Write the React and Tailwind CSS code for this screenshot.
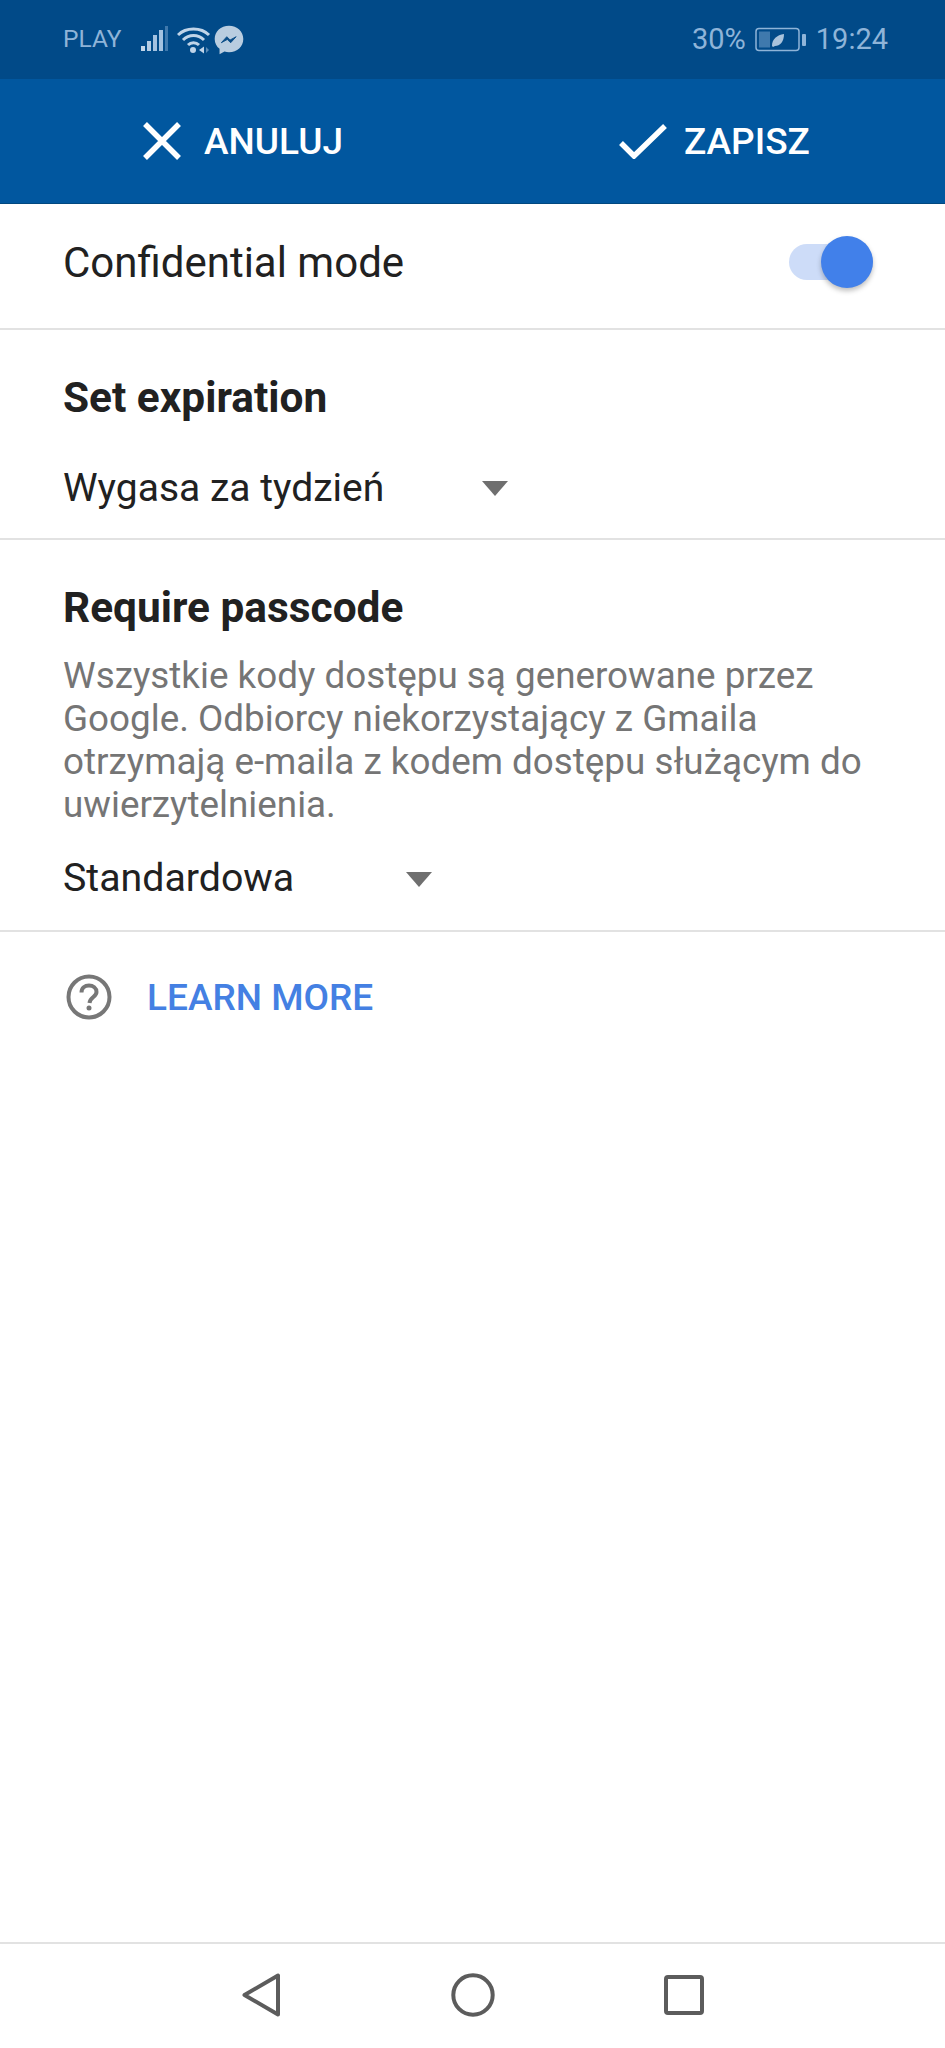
import React from 'react';

function SignalIcon() {
  return (
    <svg width="28" height="28" viewBox="0 0 28 28" className="block">
      <rect x="0" y="20" width="4" height="5" fill="#c4d6e8" />
      <rect x="6" y="15" width="4" height="10" fill="#b4cce4" />
      <rect x="12" y="9" width="4" height="16" fill="#a4c2e0" />
      <rect x="18" y="4" width="4" height="21" fill="#a4c2e0" />
      <rect x="24" y="0" width="3" height="25" fill="#3f79ad" />
    </svg>
  );
}

function WifiIcon() {
  return (
    <svg width="34" height="28" viewBox="0 0 34 28" fill="none" className="block" stroke="#c0d4e8" strokeWidth="3">
      <path d="M1 9C9 1 24 1 32 9" />
      <path d="M6 14C12 8 21 8 27 14" />
      <path d="M11 19C14 16 19 16 22 19" />
      <circle cx="16" cy="24" r="3" fill="#c0d4e8" stroke="none" />
      <path d="M22 24l5-3.500v7z" fill="#c0d4e8" stroke="none" />
      <path d="M29 21l3 3-3 3z" fill="#5c8cb8" stroke="none" />
    </svg>
  );
}

function MessengerIcon() {
  return (
    <svg width="28" height="28" viewBox="0 0 28 28" className="block">
      <path d="M14 1C6.500 1 1 6.300 1 13c0 3.700 1.700 6.900 4.400 9v5l4.500-2.500c1.300.4 2.700.6 4.100.6 7.500 0 13-5.400 13-12.100S21.500 1 14 1z" fill="#b9cde0" />
      <path d="M7 16.500l5-5.500 3 3 5.500-3-5 5.500-3-3z" fill="#0a4d88" stroke="#0a4d88" strokeWidth="0.8" />
    </svg>
  );
}

function BatteryIcon() {
  return (
    <svg width="52" height="26" viewBox="0 0 52 26" className="block">
      <rect x="1" y="1.500" width="43" height="22" rx="3" fill="none" stroke="#8fb4d8" strokeWidth="1.500" />
      <rect x="4" y="4.500" width="11" height="16" fill="#3f79ad" />
      <path d="M17 19c0-7 5-11 12-12 0 8-4 12-9 12l-2 1z" fill="#a9c3dc" />
      <rect x="47" y="7" width="4" height="12" rx="1" fill="#8fb4d8" />
    </svg>
  );
}

function Caret() {
  return (
    <svg width="26" height="15" viewBox="0 0 26 15" className="block">
      <path d="M0 0h26L13 15z" fill="#6f6f6f" />
    </svg>
  );
}

function Divider() {
  return <div className="h-[2px] bg-[#e2e2e2]" />;
}

export default function App() {
  return (
    <div className="w-[945px] h-[2048px] bg-white flex flex-col font-['Roboto',sans-serif] text-[#212121] overflow-hidden">
      {/* status bar */}
      <div className="h-[79px] bg-[#014a88] flex items-center justify-between pl-[63px] pr-[57px] text-[#8fb4d8]">
        <div className="flex items-center">
          <span className="text-[24.500px] leading-none">PLAY</span>
          <div className="flex items-center ml-[20px]">
            <SignalIcon />
            <div className="ml-[8px]">
              <WifiIcon />
            </div>
            <div className="ml-[4px] scale-110">
              <MessengerIcon />
            </div>
          </div>
        </div>
        <div className="flex items-center text-[29px] leading-none">
          <span>30%</span>
          <div className="ml-[9px] mr-[9px]">
            <BatteryIcon />
          </div>
          <span>19:24</span>
        </div>
      </div>

      {/* action bar */}
      <div className="h-[125px] bg-[#01579f] border-b border-[#01487f] flex items-center text-white text-[37px] font-medium">
        <div className="flex items-center ml-[143px]">
          <svg width="38" height="38" viewBox="0 0 38 38" className="block">
            <path d="M2 2l34 34M36 2L2 36" stroke="#fff" strokeWidth="5.500" fill="none" />
          </svg>
          <span className="ml-[23px] leading-none">ANULUJ</span>
        </div>
        <div className="flex items-center ml-[276px]">
          <svg width="48" height="36" viewBox="0 0 48 36" className="block">
            <path d="M2 20l13 13L46 3" stroke="#fff" strokeWidth="5.500" fill="none" />
          </svg>
          <span className="ml-[17px] leading-none">ZAPISZ</span>
        </div>
      </div>

      {/* confidential toggle */}
      <div className="h-[124px] flex items-center justify-between pl-[63px] pr-[72px] pb-[6px]">
        <span className="text-[42px] leading-none">Confidential mode</span>
        <div className="relative w-[84px] h-[36px] mb-[3px] rounded-full bg-[#cddcf8]">
          <div className="absolute right-0 top-[-8px] w-[52px] h-[52px] rounded-full bg-[#4180ea] shadow-[0_3px_5px_rgba(0,0,0,0.25)]" />
        </div>
      </div>
      <Divider />

      {/* expiration */}
      <div className="h-[208px] pl-[63px] pt-[45px]">
        <h2 className="text-[42.400px] leading-[46px] font-bold">Set expiration</h2>
        <div className="flex items-center mt-[44px] h-[46px]">
          <span className="text-[39px] leading-none">Wygasa za tydzień</span>
          <div className="ml-[98px]">
            <Caret />
          </div>
        </div>
      </div>
      <Divider />

      {/* passcode */}
      <div className="h-[390px] pl-[63px] pr-[63px] pt-[45px]">
        <h2 className="text-[42.400px] leading-[46px] font-bold">Require passcode</h2>
        <p className="mt-[23px] text-[36.800px] leading-[43px] text-[#757575]">
          Wszystkie kody dostępu są generowane przez Google. Odbiorcy niekorzystający z Gmaila otrzymają e-maila z kodem dostępu służącym do uwierzytelnienia.
        </p>
        <div className="flex items-center mt-[30px] h-[46px]">
          <span className="text-[39.300px] leading-none">Standardowa</span>
          <div className="ml-[112px]">
            <Caret />
          </div>
        </div>
      </div>
      <Divider />

      {/* learn more */}
      <div className="h-[130px] flex items-center pl-[66px]">
        <svg width="46" height="46" viewBox="0 0 46 46" fill="none" className="block">
          <circle cx="23" cy="23" r="20.500" stroke="#777" strokeWidth="4" />
          <path d="M15.500 18.500c0-4.500 3.500-7 7.500-7s7.500 2.500 7.500 6.500c0 5-6.500 5-7 11" stroke="#777" strokeWidth="4" />
          <circle cx="23" cy="34" r="2.500" fill="#777" />
        </svg>
        <span className="ml-[35px] text-[37px] leading-none font-medium text-[#4480e3]">LEARN MORE</span>
      </div>

      <div className="flex-1" />

      {/* nav bar */}
      <div className="h-[106px] border-t-2 border-[#e2e2e2] flex items-center pl-[242px] pb-[2px]">
        <svg width="38" height="44" viewBox="0 0 38 44" fill="none" className="block">
          <path d="M36 2.500v39L2.500 22z" stroke="#5c5c5c" strokeWidth="4" strokeLinejoin="round" />
        </svg>
        <svg width="44" height="44" viewBox="0 0 44 44" fill="none" className="block ml-[171px]">
          <circle cx="22" cy="22" r="19.700" stroke="#5c5c5c" strokeWidth="4" />
        </svg>
        <svg width="40" height="40" viewBox="0 0 40 40" fill="none" className="block ml-[169px]">
          <rect x="2" y="2" width="36" height="36" rx="2" stroke="#5c5c5c" strokeWidth="4" />
        </svg>
      </div>
    </div>
  );
}
